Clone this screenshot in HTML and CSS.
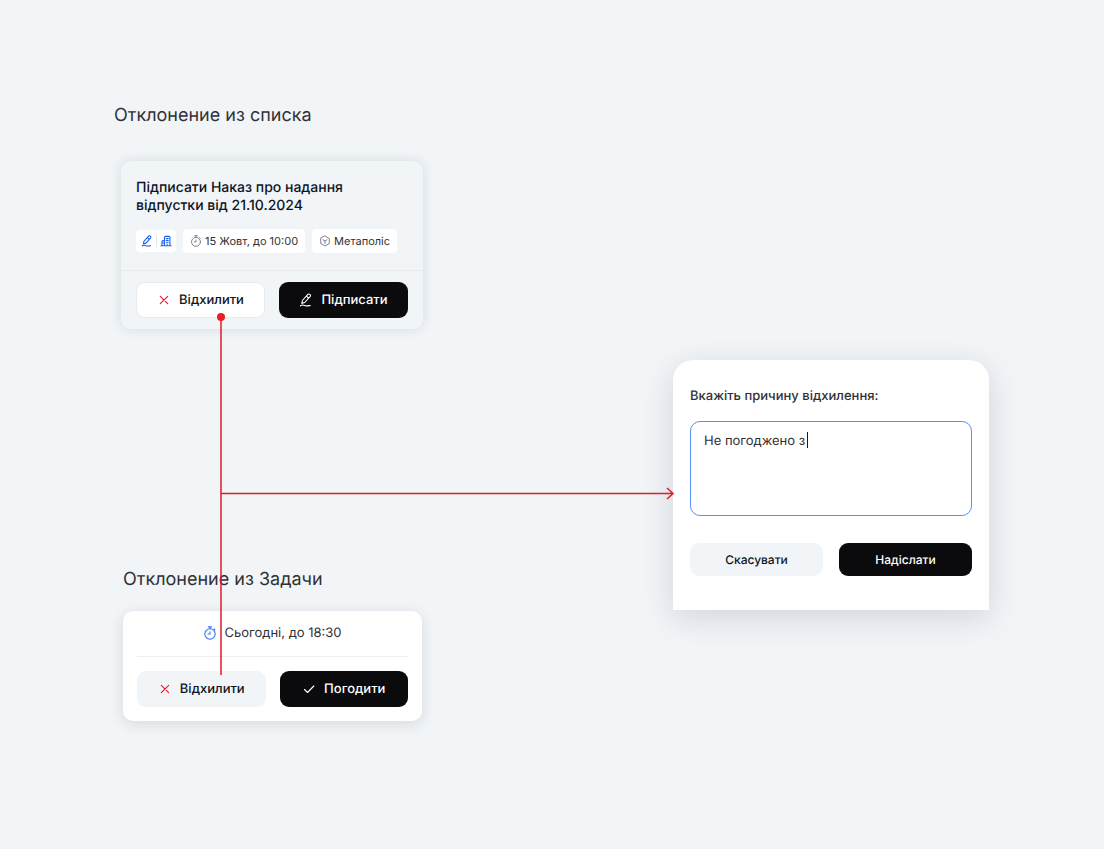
FILE: index.html
```html
<!DOCTYPE html>
<html lang="uk">
<head>
<meta charset="utf-8">
<meta name="viewport" content="width=device-width, initial-scale=1">
<title>Відхилення документа</title>
<link rel="stylesheet" href="styles.css">
</head>
<body>
<svg class="symbols" aria-hidden="true">
  <symbol id="pen" viewBox="0 0 14 14"><path d="M3.400 7.500 8.600 1.600c.7-.7 1.600-.8 2.300-.2.700.6.700 1.500.1 2.200L5.700 9.500 2.800 10.400z M7.400 3.100 9.600 5 M1.500 12.800c1.800-1.400 3-.9 4-.3 1.200.7 2.600.4 5.800 0"/></symbol>
  <symbol id="building" viewBox="0 0 14 14"><path d="M1 12.600h12 M5.200 12.600V3q0-1.400 1.400-1.400h3.600Q11.600 1.600 11.600 3v9.600 M2.300 12.600V7.700q0-1.200 1.200-1.200h1.700 M7.300 4.200h2.300M7.300 6.600h2.300M7.300 9h2.300M2.800 9.300h2M8.400 12.600v-1.500"/></symbol>
  <symbol id="timer" viewBox="0 0 14 14"><path d="M5.400 .9h3.200M7 .9v2M11.100 3l.8.8M7 5.800V8H5"/><circle cx="7" cy="8" r="5.200"/></symbol>
  <symbol id="cube" viewBox="0 0 14 14"><path d="M7 1.200 12 4v6L7 12.800 2 10V4z M4.600 5.600 7 7l2.400-1.400M7 7v2.800"/></symbol>
  <symbol id="cross" viewBox="0 0 14 14"><path d="m3.300 3.300 7.400 7.400m0-7.400-7.400 7.400"/></symbol>
  <symbol id="check" viewBox="0 0 14 14"><path d="m2.500 7.500 3 3 6.300-6.500"/></symbol>
</svg>
<main class="canvas">
  <section class="frame frame-list">
    <h2 class="frame-title">Отклонение из списка</h2>
    <article class="card card-list">
      <div class="card-body">
        <h3 class="card-title">Підписати Наказ про надання відпустки від 21.10.2024</h3>
        <div class="tags">
          <span class="tag tag-types"><svg class="icon icon-small"><use href="#pen"/></svg><i class="tag-divider"></i><svg class="icon icon-small"><use href="#building"/></svg></span>
          <span class="tag"><svg class="icon icon-tag"><use href="#timer"/></svg>15 Жовт, до 10:00</span>
          <span class="tag"><svg class="icon icon-tag"><use href="#cube"/></svg>Метаполіс</span>
        </div>
      </div>
      <div class="actions card-footer">
        <button class="button button-outline" type="button"><svg class="icon icon-red"><use href="#cross"/></svg>Відхилити</button>
        <button class="button button-dark" type="button"><svg class="icon"><use href="#pen"/></svg>Підписати</button>
      </div>
    </article>
  </section>

  <section class="frame frame-task">
    <h2 class="frame-title">Отклонение из Задачи</h2>
    <article class="card card-task">
      <p class="deadline"><svg class="icon icon-blue"><use href="#timer"/></svg>Сьогодні, до 18:30</p>
      <div class="actions">
        <button class="button button-soft" type="button"><svg class="icon icon-red"><use href="#cross"/></svg>Відхилити</button>
        <button class="button button-dark" type="button"><svg class="icon"><use href="#check"/></svg>Погодити</button>
      </div>
    </article>
  </section>

  <form class="frame dialog">
    <label class="dialog-label" for="reason">Вкажіть причину відхилення:</label>
    <div class="field">
      <textarea class="reason" id="reason">Не погоджено з</textarea>
      <span class="caret"></span>
    </div>
    <div class="actions dialog-actions">
      <button class="button button-soft button-compact" type="button">Скасувати</button>
      <button class="button button-dark button-compact" type="button">Надіслати</button>
    </div>
  </form>

  <svg class="connector" viewBox="0 0 458 364" aria-hidden="true">
    <path d="M4 5v358M4 181.500h452M450 176l6 5.500-6 5.500"/>
    <circle cx="4" cy="5" r="4"/>
  </svg>
</main>
</body>
</html>
```

FILE: styles.css
```css
* { box-sizing: border-box; }

body {
  margin: 0;
  background: #f1f5f8;
  color: #303136;
  font-family: Inter, "Noto Sans", sans-serif;
  text-rendering: geometricPrecision;
}

h2, h3, p { margin: 0; }

.symbols { display: none; }

.canvas {
  position: relative;
  min-height: 100vh;
}

/* Frames placed on the free canvas */
.frame { position: absolute; }
.frame-list { left: 114px; top: 104px; }
.frame-task { left: 123px; top: 568px; }
.dialog { left: 673px; top: 360px; }

.frame-title {
  font-size: 18px;
  line-height: 24px;
  font-weight: 400;
}

.card {
  border-radius: 10px;
  font-size: 13px;
}

.card-list {
  width: 302px;
  margin: 33px 0 0 7px;
  background: #f1f5f8;
  box-shadow: 0 0 12px rgba(20, 24, 32, 0.12);
}

.card-body { padding: 18px 15px 17px; }

.card-title {
  max-width: 240px;
  color: #0e1424;
  font-size: 14px;
  line-height: 18px;
  font-weight: 500;
}

.tags {
  display: flex;
  align-items: center;
  gap: 7px;
  margin-top: 14px;
}

.tag {
  display: flex;
  align-items: center;
  gap: 3px;
  height: 24px;
  padding: 0 7px;
  border-radius: 4px;
  background: #fff;
  font-size: 11px;
  white-space: nowrap;
}

.tag-types {
  height: 22px;
  padding: 0 4px 0 5px;
  color: #1d63e9;
}

.tag-divider {
  width: 1px;
  height: 12px;
  background: #e3e7ed;
}

.icon {
  flex: none;
  width: 14px;
  height: 14px;
  fill: none;
  stroke: currentColor;
  stroke-width: 1.1;
  stroke-linecap: round;
  stroke-linejoin: round;
}

.icon-small { width: 12px; height: 12px; stroke-width: 1.3; }
.icon-tag { width: 12px; height: 12px; color: #777a88; }
.icon-red { color: #e8142c; }
.icon-blue { color: #3378f6; }

.actions {
  display: grid;
  grid-template-columns: 1fr 1fr;
  gap: 14px;
}

.card-footer {
  padding: 11px 15px;
  border-top: 1px solid #e8ebee;
}

.button {
  display: flex;
  align-items: center;
  justify-content: center;
  gap: 8px;
  height: 36px;
  padding: 0;
  border: 0;
  border-radius: 9px;
  color: #0e1424;
  font: 500 13px/18px Inter, "Noto Sans", sans-serif;
  text-rendering: inherit;
}

.button-outline { border: 1px solid #e8ebee; background: #fff; }
.button-soft { background: #f1f5f8; }
.button-dark { background: #0b0b0d; color: #fff; }

.card-task {
  width: 299px;
  margin-top: 19px;
  padding: 0 14px 14px;
  background: #fff;
  box-shadow: 0 3px 14px rgba(20, 24, 32, 0.12);
}

.deadline {
  display: flex;
  align-items: center;
  justify-content: center;
  gap: 7px;
  height: 46px;
  margin-bottom: 14px;
  padding-bottom: 2px;
  border-bottom: 1px solid #eceff1;
}

.dialog {
  width: 316px;
  padding: 26px 17px 34px;
  border-radius: 20px 20px 0 0;
  background: #fff;
  box-shadow: 0 8px 32px rgba(20, 24, 32, 0.14);
}

.dialog-label {
  display: block;
  font-size: 13px;
  line-height: 20px;
  font-weight: 500;
}

.field { position: relative; margin-top: 15px; }

.reason {
  display: block;
  width: 100%;
  height: 95px;
  padding: 9px 13px;
  border: 1px solid #5790f5;
  border-radius: 10px;
  outline: 0;
  resize: none;
  background: #fff;
  color: #303136;
  font: 400 13px/20px Inter, "Noto Sans", sans-serif;
  text-rendering: inherit;
}

.caret {
  position: absolute;
  left: 117px;
  top: 11px;
  width: 1px;
  height: 16px;
  background: #17181c;
}

.dialog-actions { gap: 16px; margin-top: 27px; }
.button-compact { height: 33px; font-size: 12px; }

/* Arrow leading from both cards to the dialog */
.connector {
  position: absolute;
  left: 217px;
  top: 312px;
  width: 458px;
  height: 364px;
  overflow: visible;
  pointer-events: none;
  fill: none;
  stroke: #e31b28;
  stroke-width: 1.5;
}

.connector circle { fill: #ed1c2a; stroke: none; }
```
